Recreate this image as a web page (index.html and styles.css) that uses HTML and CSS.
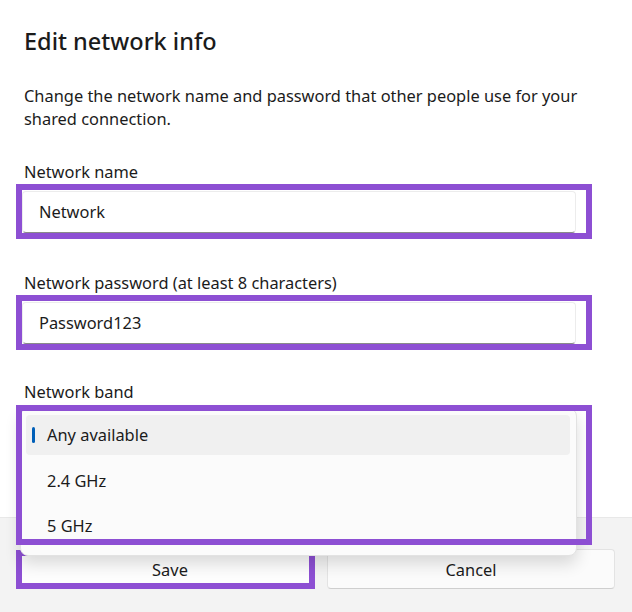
FILE: index.html
```html
<!DOCTYPE html>
<html lang="en">
<head>
  <meta charset="UTF-8" />
  <title>Edit network info</title>
  <link rel="stylesheet" href="styles.css">
</head>
<body>

<div class="dialog">
  <div class="content">
    <h1 class="title">Edit network info</h1>
    <p class="desc">Change the network name and password that other people use for your shared connection.</p>

    <div class="field">
      <div class="label">Network name</div>
      <div class="mark">
        <div class="textbox">Network</div>
      </div>
    </div>

    <div class="field">
      <div class="label">Network password (at least 8 characters)</div>
      <div class="mark">
        <div class="textbox">Password123</div>
      </div>
    </div>

    <div class="field band">
      <div class="label">Network band</div>
      <div class="combo">
        <div class="menu">
          <div class="option selected">Any available</div>
          <div class="option">2.4 GHz</div>
          <div class="option">5 GHz</div>
        </div>
        <div class="menu-mark"></div>
      </div>
    </div>
  </div>

  <div class="footer">
    <div class="save-mark">
      <button class="btn save">Save</button>
    </div>
    <button class="btn cancel">Cancel</button>
  </div>
</div>

</body>
</html>
```

FILE: styles.css
```css
body {
  margin: 0;
  font-family: "Noto Sans", "Open Sans", sans-serif;
  background: #fff;
  color: #1b1b1b;
}

.dialog {
  width: 632px;
  height: 612px;
  display: flex;
  flex-direction: column;
}

.content {
  padding: 27px 24px 0 24px;
  height: 490px;
}

.title {
  margin: 0;
  font-size: 23.5px;
  line-height: 28px;
  font-weight: 500;
}

.desc {
  margin: 29px 0 0 0;
  font-size: 16.4px;
  line-height: 23px;
  width: 580px;
}

.field {
  margin-top: 31px;
}

.field + .field {
  margin-top: 33px;
}

.field.band {
  margin-top: 31px;
}

.label {
  font-size: 16.4px;
  line-height: 22px;
  margin-bottom: 1px;
}

.band .label {
  margin-bottom: 2px;
}

.mark {
  margin-left: -8px;
  width: 554px;
  border: 6px solid #8d4fd3;
  padding: 1px 10px 0 0;
}

.textbox {
  height: 40px;
  line-height: 40px;
  padding-left: 16px;
  font-size: 16.4px;
  border: 1px solid #ececec;
  border-bottom-color: #8a8a8a;
  border-radius: 4px;
  background: #fff;
}

.combo {
  position: relative;
  margin-left: -8px;
  height: 32px;
}

.menu {
  position: absolute;
  left: 4px;
  top: 3px;
  width: 555px;
  height: 140px;
  padding-top: 6px;
  background: #fbfbfb;
  border: 1px solid #e2e2e2;
  border-radius: 8px;
  box-shadow: 0 8px 16px rgba(0, 0, 0, 0.14);
  z-index: 2;
}

.option {
  position: relative;
  height: 40px;
  line-height: 40px;
  margin: 0 6px 5px 5px;
  padding-left: 21px;
  font-size: 16.4px;
  border-radius: 4px;
}

.option.selected {
  background: #f0f0f0;
  margin-bottom: 6px;
}

.option.selected::before {
  content: "";
  position: absolute;
  left: 6px;
  top: 12px;
  width: 3px;
  height: 16px;
  border-radius: 2px;
  background: #005fb8;
}

.menu-mark {
  position: absolute;
  left: 0;
  top: 0;
  width: 564px;
  height: 128px;
  border: 6px solid #8d4fd3;
  z-index: 3;
}

.footer {
  flex: 1;
  background: #f3f3f3;
  border-top: 1px solid #e8e8e8;
  display: flex;
  gap: 12px;
  padding: 31px 17px 0 16px;
}

.save-mark {
  width: 287px;
  height: 27px;
  border: 6px solid #8d4fd3;
  margin-top: 1px;
  background: #fff;
}

.btn {
  font-family: inherit;
  font-size: 16.4px;
  color: #1b1b1b;
  background: #fdfdfd;
  border: none;
  width: 100%;
  height: 100%;
  padding: 0;
}

.btn.save {
  padding-left: 9px;
}

.btn.cancel {
  flex: 1;
  height: 40px;
  border: 1px solid #e3e3e3;
  border-bottom-color: #cfcfcf;
  border-radius: 4px;
  background: #fbfbfb;
}
```
